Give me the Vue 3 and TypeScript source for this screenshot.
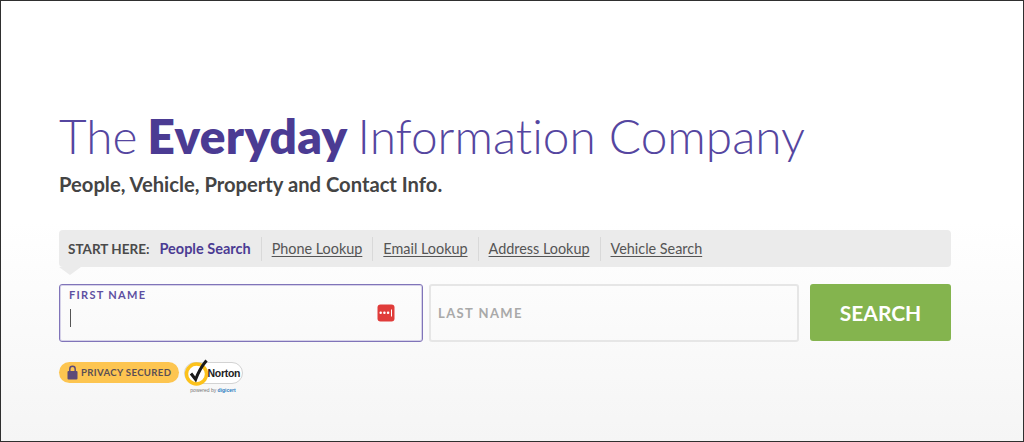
<script setup lang="ts">
const links: string[] = ['Phone Lookup', 'Email Lookup', 'Address Lookup', 'Vehicle Search']
</script>

<template>
  <main class="page">
    <h1 class="title">The <strong>Everyday</strong> Information Company</h1>
    <p class="subtitle">People, Vehicle, Property and Contact Info.</p>
    <nav class="tabs">
      <span class="start">START HERE:</span>
      <span class="active">People Search</span>
      <template v-for="l in links" :key="l">
        <span class="sep"></span>
        <a class="link" href="#">{{ l }}</a>
      </template>
    </nav>
    <form class="form" @submit.prevent>
      <div class="field first">
        <label class="small-label">FIRST NAME</label>
        <span class="caret"></span>
        <svg class="pw" width="18" height="18" viewBox="0 0 18 18">
          <rect x="0.5" y="0.5" width="17" height="17" rx="3" fill="#e03c3a" />
          <rect x="2.5" y="7.5" width="2.4" height="2.4" rx="1" fill="#fff" />
          <rect x="6.2" y="7.5" width="2.4" height="2.4" rx="1" fill="#fff" />
          <rect x="9.9" y="7.5" width="2.4" height="2.4" rx="1" fill="#fff" />
          <rect x="14" y="5.5" width="1" height="7" fill="#fff" />
        </svg>
      </div>
      <div class="field last"><span class="big-label">LAST NAME</span></div>
      <button class="btn" type="button">SEARCH</button>
    </form>
    <div class="badges">
      <span class="privacy">
        <svg width="11" height="15" viewBox="0 0 11 15">
          <path d="M2.8 7V4a2.7 2.7 0 0 1 5.4 0V7" fill="none" stroke="#5d4a78" stroke-width="1.5" />
          <rect x="0.5" y="6" width="10" height="8.5" rx="1" fill="#5d4a78" />
        </svg>
        PRIVACY SECURED
      </span>
      <span class="norton">
        <span class="pill">
          <svg class="seal" width="32" height="34" viewBox="0 0 32 34">
            <circle cx="13.5" cy="17" r="10" fill="#fff" stroke="#fcc21b" stroke-width="3.4" />
            <path d="M8 16.5l4.6 6C15 16 18 10 23.5 3.5" fill="none" stroke="#1a1a1a" stroke-width="3" />
          </svg>
          <span class="nword">Norton</span>
        </span>
        <span class="powered">powered by <b>digicert</b></span>
      </span>
    </div>
  </main>
</template>

<style>
html, body { margin: 0; }
</style>

<style scoped>
.page {
  box-sizing: border-box;
  width: 1024px;
  height: 442px;
  padding: 105px 0 0 58px;
  overflow: hidden;
  border: 1px solid #2f2f2f;
  background: linear-gradient(#fff 0, #fff 50%, #f5f5f5 100%);
  font-family: Lato, "Open Sans", sans-serif;
  font-variant-ligatures: none;
  color: #444;
}
.title {
  margin: 0;
  font-size: 47.8px;
  line-height: 60px;
  font-weight: 300;
  color: #5546a0;
  white-space: nowrap;
}
.title strong { font-weight: 800; letter-spacing: 0.3px; margin: 0 -3px 0 -3px; color: #4b3b93; }
.subtitle {
  margin: 5px 0 0;
  font-size: 20.2px;
  line-height: 26px;
  font-weight: 700;
  color: #444;
}
.tabs {
  position: relative;
  display: flex;
  align-items: center;
  box-sizing: border-box;
  width: 892px;
  height: 37px;
  margin-top: 33px;
  padding-left: 9px;
  border-radius: 4px;
  background: #ebebeb;
  font-size: 14.4px;
}
.tabs::after {
  content: "";
  position: absolute;
  left: 0;
  top: 37px;
  width: 22px;
  height: 8px;
  background: #ebebeb;
  clip-path: polygon(0 0, 100% 0, 50% 100%, 0 0);
}
.start { font-size: 13.5px; font-weight: 700; color: #4a4a4a; }
.active { margin-left: 10px; font-size: 14.5px; font-weight: 700; color: #4b3b93; }
.sep { width: 1px; height: 24px; margin: 0 10px; background: #d9d9d9; }
.link { color: #555; text-decoration: underline; text-underline-offset: 2px; }
.form { display: flex; width: 892px; height: 58px; margin-top: 17px; }
.field {
  position: relative;
  box-sizing: border-box;
  height: 58px;
  border-radius: 3px;
}
.first { width: 364px; border: 1px solid #8074b9; box-shadow: inset 0 0 0 1px #d6d2e8; }
.last {
  display: flex;
  align-items: center;
  width: 370px;
  margin-left: 6px;
  padding-left: 7px;
  border: 2px solid #e6e6e6;
}
.small-label {
  position: absolute;
  left: 9px;
  top: 3px;
  font-size: 11px;
  line-height: 14px;
  font-weight: 700;
  letter-spacing: 1.3px;
  color: #5e50a2;
}
.big-label { font-size: 13px; font-weight: 700; letter-spacing: 1.4px; color: #a9a9a9; }
.caret { position: absolute; left: 10px; top: 24px; width: 1px; height: 18px; background: #555; }
.pw { position: absolute; left: 317px; top: 19px; }
.btn {
  width: 141px;
  height: 57px;
  margin-left: 11px;
  padding: 0;
  border: 0;
  border-radius: 3px;
  background: #84b44e;
  color: #fff;
  font: 700 21px Lato, sans-serif;
  font-variant-ligatures: none;
}
.badges { display: flex; align-items: flex-start; margin-top: 20px; }
.privacy {
  display: flex;
  align-items: center;
  gap: 3px;
  box-sizing: border-box;
  width: 120px;
  height: 21px;
  padding-left: 8px;
  border-radius: 11px;
  background: #fdc550;
  font-size: 9.6px;
  font-weight: 700;
  letter-spacing: 0.35px;
  color: #5a4f55;
  white-space: nowrap;
}
.norton { display: flex; flex-direction: column; align-items: center; width: 60px; margin-left: 4px; margin-top: -2px; }
.pill {
  position: relative;
  box-sizing: border-box;
  display: block;
  width: 59px;
  height: 22px;
  margin-top: 2px;
  border: 1px solid #d3d3d3;
  border-radius: 11px;
  background: #fff;
}
.seal { position: absolute; left: -2px; top: -6px; }
.nword { position: absolute; left: 23px; top: 3px; font: 700 10.5px/14px "Liberation Sans", sans-serif; letter-spacing: -0.3px; color: #222; }
.powered { margin-top: 3px; font: 5px/7px "Liberation Sans", sans-serif; color: #777; }
.powered b { color: #2a7dbf; }
</style>
